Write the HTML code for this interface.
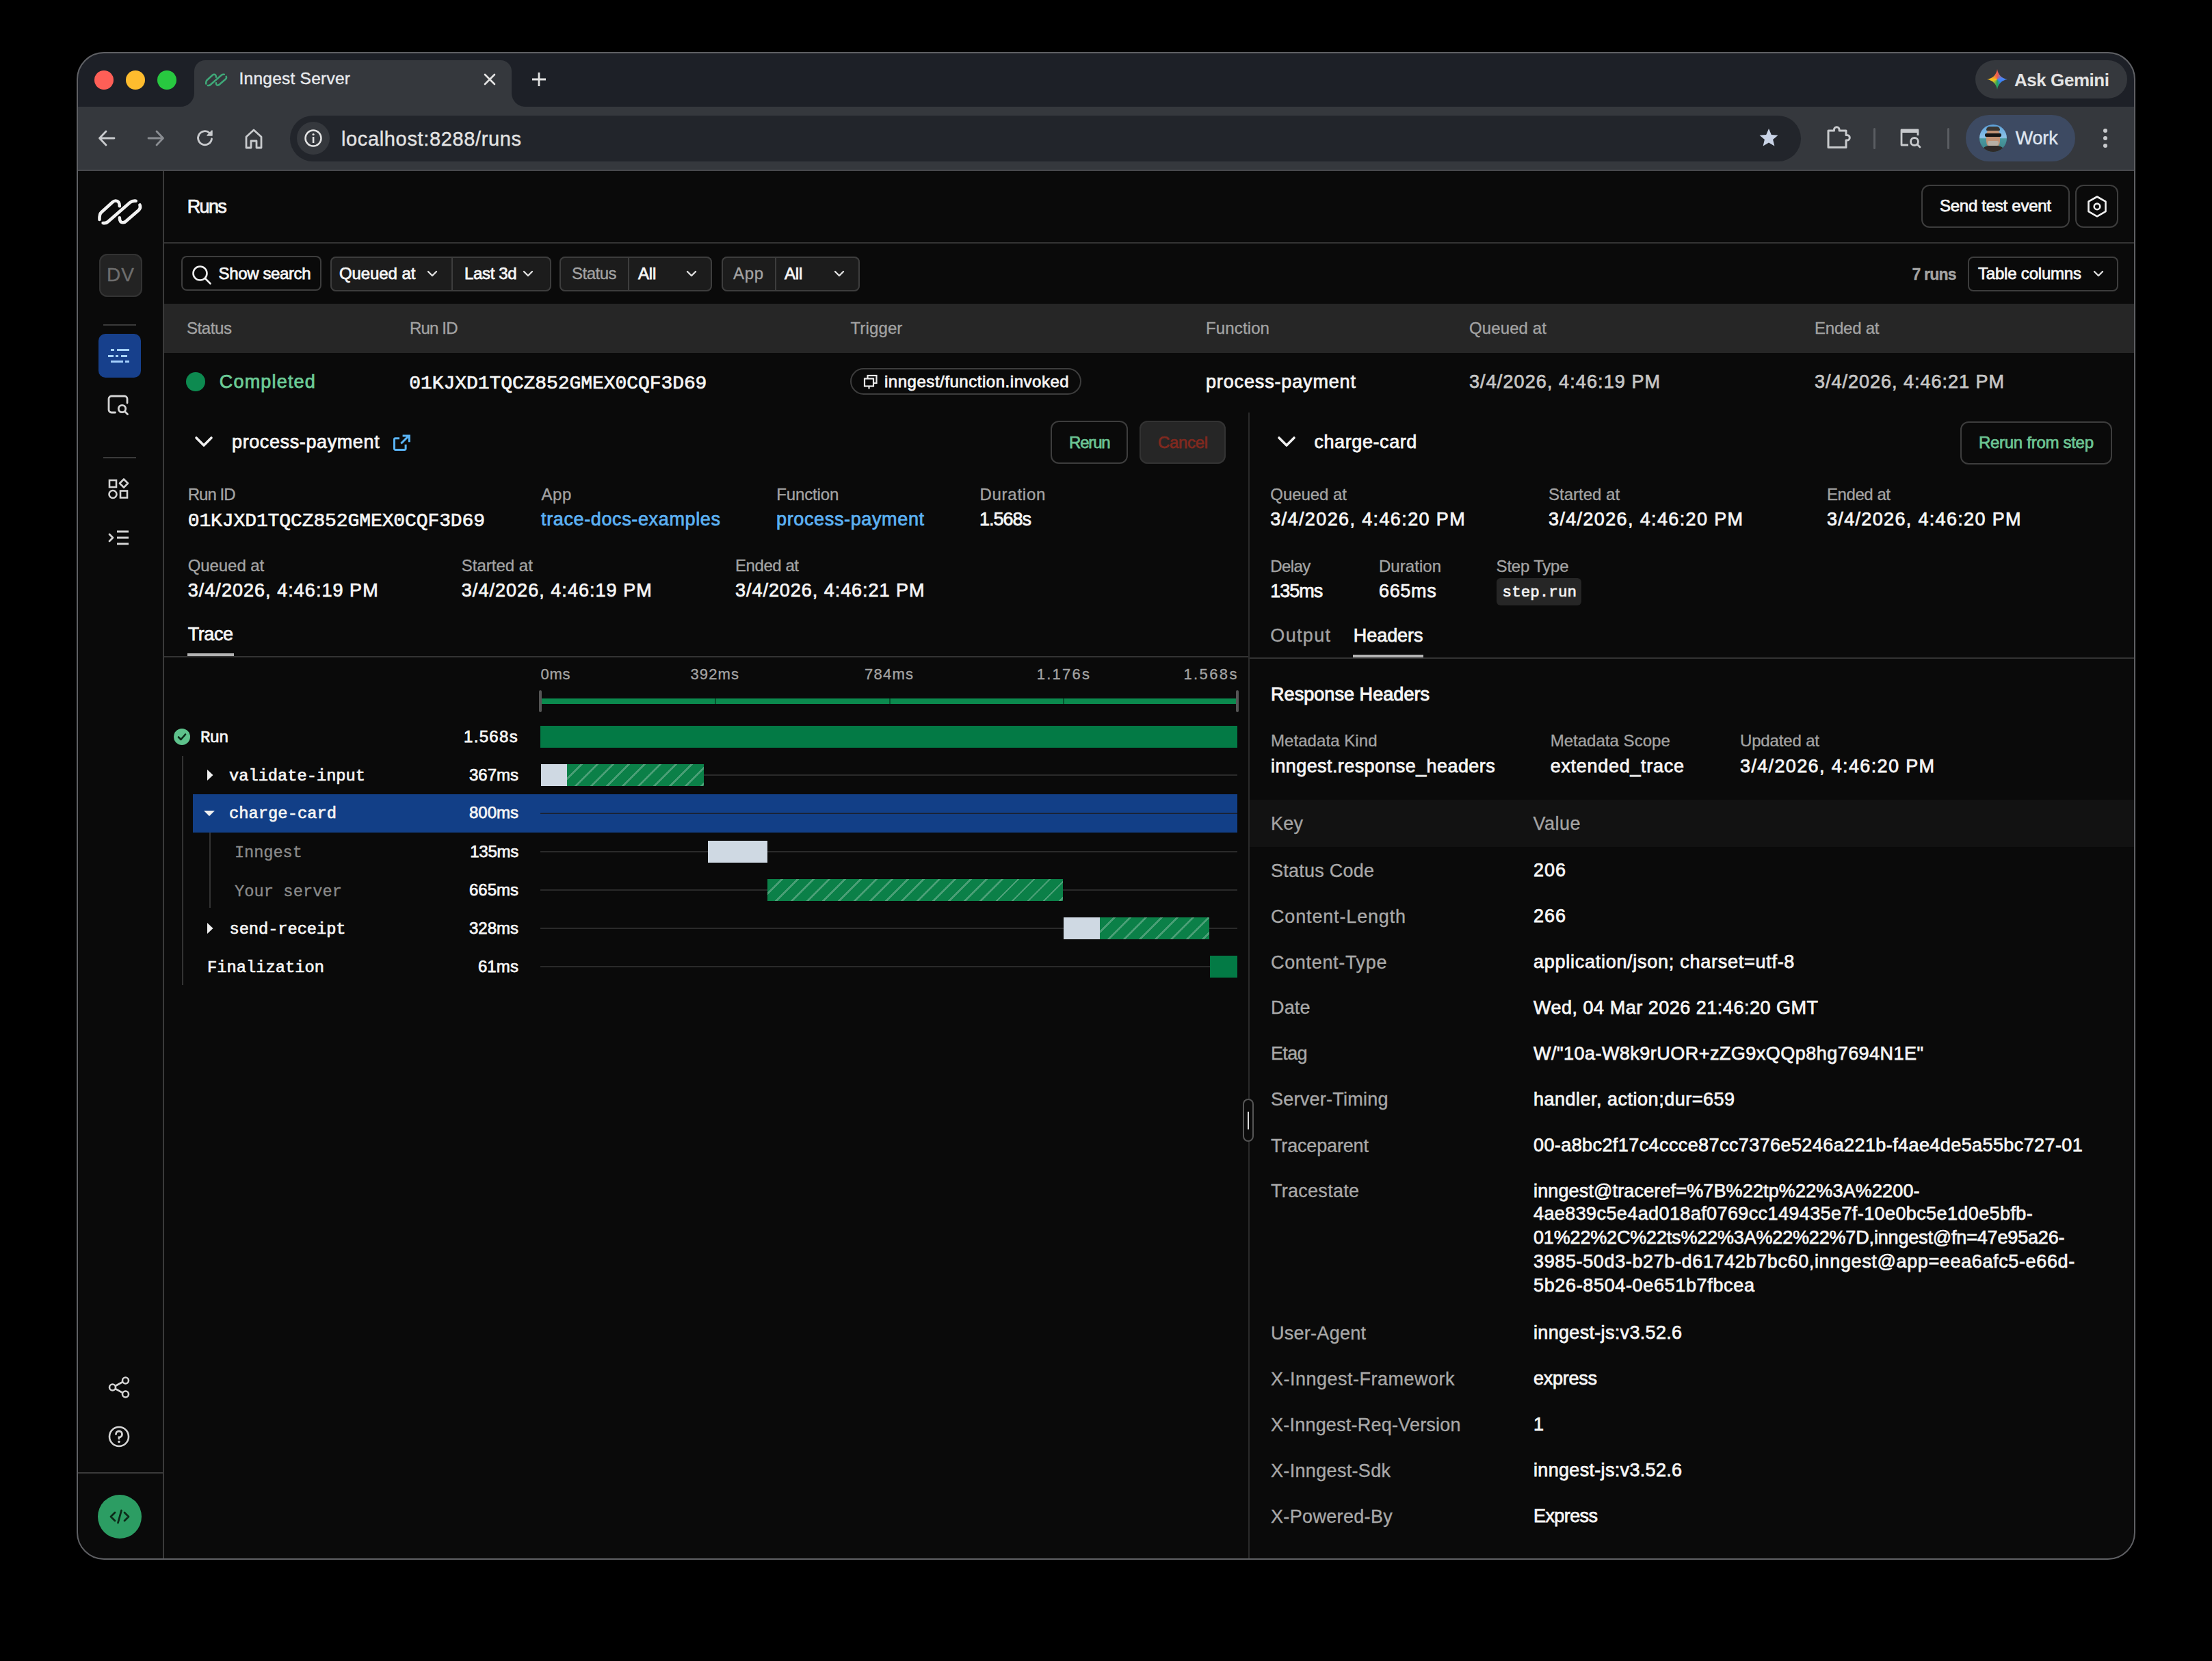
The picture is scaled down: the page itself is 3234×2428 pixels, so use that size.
<!DOCTYPE html>
<html><head><meta charset="utf-8"><style>
html,body{margin:0;padding:0;width:3234px;height:2428px;overflow:hidden;background:#000;}
.a{position:absolute;}
.ts{font-family:"Liberation Sans", sans-serif;white-space:pre;}
.tm{font-family:"Liberation Mono", monospace;white-space:pre;}
#win{position:absolute;left:0;top:0;width:3234px;height:2428px;clip-path:inset(76px 112px 148px 112px round 40px);}
</style></head><body>
<div id="win">
<div class="a" style="left:112px;top:76px;width:3010px;height:80px;background:#1d2027;"></div>
<div class="a" style="left:284px;top:88px;width:464px;height:68px;background:#35383d;border-radius:16px 16px 0 0;"></div>
<div class="a" style="left:264px;top:136px;width:20px;height:20px;background:#35383d"><div style="width:20px;height:20px;background:#1d2027;border-bottom-right-radius:20px"></div></div>
<div class="a" style="left:748px;top:136px;width:20px;height:20px;background:#35383d"><div style="width:20px;height:20px;background:#1d2027;border-bottom-left-radius:20px"></div></div>
<div class="a" style="left:112px;top:156px;width:3010px;height:93px;background:#35383d;"></div>
<div class="a" style="left:137.7px;top:103px;width:28px;height:28px;background:#fe5f57;border-radius:14px;"></div>
<div class="a" style="left:184px;top:103px;width:28px;height:28px;background:#febc2e;border-radius:14px;"></div>
<div class="a" style="left:230px;top:103px;width:28px;height:28px;background:#28c840;border-radius:14px;"></div>
<svg class="a" style="left:296px;top:101.5px;" width="40" height="30" viewBox="0 0 80 60" fill="none"><path d="M39.8 21.3 C40 16 37.5 13.5 34 13.5 C32.5 13.5 31 14.2 29.5 15.5 L13 30.5 C10.5 32.8 10.3 36 10.5 40.9" stroke="#3fa878" stroke-width="5" stroke-linecap="round"/><path d="M15.6 46 C18.5 46.5 21 46 23 44 L55 16 C57.5 14 60 13.3 63.7 13.7" stroke="#3fa878" stroke-width="5" stroke-linecap="round"/><path d="M69.4 19.5 C70.5 22 70 25 68 27 L49 43.5 C47 45.5 43 46 41.3 44 C40 42.5 39.8 40.5 39.8 38.3" stroke="#3fa878" stroke-width="5" stroke-linecap="round"/></svg>
<div class="a ts" id="T0" style="letter-spacing:0.24px;top:103.2px;font-size:24.5px;line-height:24.5px;color:#e8eaed;left:349.5px;-webkit-text-stroke:0.4px #e8eaed;">Inngest Server</div>
<svg class="a" style="left:706px;top:106px;" width="20" height="20" viewBox="0 0 20 20" fill="none"><path d="M3 3L17 17M17 3L3 17" stroke="#e3e3e3" stroke-width="2.6" stroke-linecap="round"/></svg>
<svg class="a" style="left:777px;top:105px;" width="22" height="22" viewBox="0 0 22 22" fill="none"><path d="M11 1V21M1 11H21" stroke="#e3e3e3" stroke-width="2.8"/></svg>
<svg class="a" style="left:142px;top:188px;" width="28" height="28" viewBox="0 0 28 28" fill="none"><path d="M25 14H4M13 4L3.5 14L13 24" stroke="#c8cacd" stroke-width="2.8" stroke-linecap="round" stroke-linejoin="round"/></svg>
<svg class="a" style="left:214px;top:188px;" width="28" height="28" viewBox="0 0 28 28" fill="none"><path d="M3 14H24M15 4L24.5 14L15 24" stroke="#8a8d92" stroke-width="2.8" stroke-linecap="round" stroke-linejoin="round"/></svg>
<svg class="a" style="left:286px;top:188px;" width="28" height="28" viewBox="0 0 28 28" fill="none"><path d="M23.5 15A10 10 0 1 1 20.5 6.5" stroke="#c8cacd" stroke-width="2.8" stroke-linecap="round"/><path d="M24 3V10H17Z" fill="#c8cacd" stroke="#c8cacd" stroke-width="1.5" stroke-linejoin="round"/></svg>
<svg class="a" style="left:357px;top:188px;" width="28" height="30" viewBox="0 0 28 30" fill="none"><path d="M3 28V12L14 2L25 12V28H18V18H10V28Z" stroke="#c8cacd" stroke-width="2.8" stroke-linejoin="round"/></svg>
<div class="a" style="left:424px;top:168.5px;width:2209px;height:67px;background:#22252b;border-radius:34px;"></div>
<div class="a" style="left:434px;top:178px;width:48px;height:48px;background:#35383d;border-radius:24px;"></div>
<svg class="a" style="left:444px;top:188px;" width="28" height="28" viewBox="0 0 28 28" fill="none"><circle cx="14" cy="14" r="11.5" stroke="#e3e3e3" stroke-width="2.5"/><rect x="12.8" y="12" width="2.6" height="9" fill="#e3e3e3"/><circle cx="14.1" cy="8.5" r="1.6" fill="#e3e3e3"/></svg>
<div class="a ts" id="T1" style="letter-spacing:0.64px;top:189.3px;font-size:29px;line-height:29px;color:#e3e3e3;left:499px;-webkit-text-stroke:0.4px #e3e3e3;">localhost:8288/runs</div>
<svg class="a" style="left:2571px;top:186px;" width="30" height="30" viewBox="0 0 30 30" fill="none"><path d="M15 2L18.8 10.9L28.5 11.7L21.1 18L23.4 27.5L15 22.5L6.6 27.5L8.9 18L1.5 11.7L11.2 10.9Z" fill="#c9d3e6"/></svg>
<svg class="a" style="left:2666px;top:180px;" width="42" height="42" viewBox="0 0 42 42" fill="none"><path d="M7 11H15.5V9.5A3.8 3.8 0 0 1 23.1 9.5V11H33V17.5H34.5A3.8 3.8 0 0 1 34.5 25.1H33V35.5H7Z" stroke="#c8cacd" stroke-width="3" stroke-linejoin="round"/></svg>
<div class="a" style="left:2738.5px;top:187px;width:3px;height:31px;background:#5a5d62;border-radius:2px;"></div>
<svg class="a" style="left:2776px;top:184px;" width="36" height="36" viewBox="0 0 36 36" fill="none"><path d="M14 28H4V6H28V14" stroke="#c8cacd" stroke-width="2.8" stroke-linejoin="round"/><rect x="4" y="5" width="24" height="5" fill="#c8cacd"/><circle cx="23" cy="23" r="5.5" stroke="#c8cacd" stroke-width="2.8"/><path d="M27 27L31 31" stroke="#c8cacd" stroke-width="2.8" stroke-linecap="round"/></svg>
<div class="a" style="left:2846.5px;top:187px;width:3px;height:31px;background:#5a5d62;border-radius:2px;"></div>
<div class="a" style="left:2874px;top:168px;width:160px;height:68px;background:#3d4a62;border-radius:34px;"></div>
<div class="a" style="left:2894px;top:182px;width:40px;height:40px;border-radius:20px;overflow:hidden;background:linear-gradient(#5b9fd8 0%,#8cc3e8 48%,#4a9aa0 52%,#3a7f86 100%)"><div style="position:absolute;left:10px;top:5px;width:20px;height:30px;border-radius:10px;background:#c09275"></div><div style="position:absolute;left:10px;top:3px;width:20px;height:6px;background:#3a3530;border-radius:8px 8px 2px 2px"></div><div style="position:absolute;left:8px;top:13px;width:24px;height:5px;background:#151515;border-radius:2px"></div><div style="position:absolute;left:12px;top:24px;width:16px;height:10px;background:#b8b0a5;border-radius:2px 2px 8px 8px"></div><div style="position:absolute;left:2px;top:31px;width:36px;height:12px;background:#2f2a28;border-radius:12px 12px 0 0"></div></div>
<div class="a ts" id="T2" style="letter-spacing:-0.17px;top:188.9px;font-size:27px;line-height:27px;color:#dfe5f0;left:2946.7px;-webkit-text-stroke:0.4px #dfe5f0;">Work</div>
<div class="a" style="left:3074.8px;top:187.8px;width:6.5px;height:6.5px;background:#c8cacd;border-radius:3.3px;"></div>
<div class="a" style="left:3074.8px;top:198.8px;width:6.5px;height:6.5px;background:#c8cacd;border-radius:3.3px;"></div>
<div class="a" style="left:3074.8px;top:209.8px;width:6.5px;height:6.5px;background:#c8cacd;border-radius:3.3px;"></div>
<div class="a" style="left:2888px;top:88px;width:222px;height:56px;background:#35383d;border-radius:28px;"></div>
<div class="a" style="left:2904px;top:100px;width:32px;height:32px;background:conic-gradient(from 0deg at 50% 50%, #f05a4c 0deg, #4c84f5 80deg, #3b82f6 120deg, #22a45d 180deg, #f5c518 260deg, #f05a4c 360deg);clip-path:path('M16 1C17 9 23 15 31 16C23 17 17 23 16 31C15 23 9 17 1 16C9 15 15 9 16 1Z')"></div>
<div class="a ts" id="T3" style="letter-spacing:-0.45px;top:104.0px;font-size:26px;line-height:26px;color:#e3e3e3;font-weight:700;left:2945px;">Ask Gemini</div>
<div class="a" style="left:112px;top:250px;width:3010px;height:2030px;background:#0a0a0a;"></div>
<div class="a" style="left:112px;top:248px;width:3010px;height:2px;background:#48494d;"></div>
<div class="a" style="left:238px;top:250px;width:2px;height:2030px;background:#3a3a3a;"></div>
<svg class="a" style="left:135px;top:280px;" width="80" height="60" viewBox="0 0 80 60" fill="none"><path d="M39.8 21.3 C40 16 37.5 13.5 34 13.5 C32.5 13.5 31 14.2 29.5 15.5 L13 30.5 C10.5 32.8 10.3 36 10.5 40.9" stroke="#f2f2f2" stroke-width="4.6" stroke-linecap="round"/><path d="M15.6 46 C18.5 46.5 21 46 23 44 L55 16 C57.5 14 60 13.3 63.7 13.7" stroke="#f2f2f2" stroke-width="4.6" stroke-linecap="round"/><path d="M69.4 19.5 C70.5 22 70 25 68 27 L49 43.5 C47 45.5 43 46 41.3 44 C40 42.5 39.8 40.5 39.8 38.3" stroke="#f2f2f2" stroke-width="4.6" stroke-linecap="round"/></svg>
<div class="a" style="left:144.5px;top:371px;width:63px;height:63px;background:#232323;border-radius:12px;box-shadow:inset 0 0 0 2px #333;"></div>
<div class="a ts" id="T4" style="letter-spacing:1.09px;top:388.2px;font-size:28px;line-height:28px;color:#6e6e6e;left:156px;-webkit-text-stroke:0.35px #6e6e6e;">DV</div>
<div class="a" style="left:151px;top:474px;width:48px;height:2px;background:#3a3a3a;"></div>
<div class="a" style="left:144px;top:488px;width:62px;height:64px;background:#17408c;border-radius:10px;"></div>
<div class="a" style="left:161.8px;top:509.5px;width:5.599999999999994px;height:3px;background:#a6d2ff;"></div>
<div class="a" style="left:170.6px;top:509.5px;width:18.599999999999994px;height:3px;background:#a6d2ff;"></div>
<div class="a" style="left:158.4px;top:518.5px;width:7.599999999999994px;height:3px;background:#a6d2ff;"></div>
<div class="a" style="left:169px;top:518.5px;width:4.400000000000006px;height:3px;background:#a6d2ff;"></div>
<div class="a" style="left:177px;top:518.5px;width:9px;height:3px;background:#a6d2ff;"></div>
<div class="a" style="left:161.8px;top:526.9px;width:17.899999999999977px;height:3px;background:#a6d2ff;"></div>
<div class="a" style="left:183.3px;top:526.9px;width:5.899999999999977px;height:3px;background:#a6d2ff;"></div>
<svg class="a" style="left:156px;top:576px;" width="34" height="32" viewBox="0 0 34 32" fill="none"><path d="M12.5 27H7A4 4 0 0 1 3 23V7A4 4 0 0 1 7 3H26A4 4 0 0 1 30 7V13" stroke="#d4d4d4" stroke-width="2.8" stroke-linecap="round"/><circle cx="22.5" cy="21.5" r="5.2" stroke="#d4d4d4" stroke-width="2.8"/><path d="M26.5 25.5L30.5 29.5" stroke="#d4d4d4" stroke-width="2.8" stroke-linecap="round"/></svg>
<div class="a" style="left:151px;top:668px;width:48px;height:2px;background:#3a3a3a;"></div>
<svg class="a" style="left:156px;top:698px;" width="34" height="34" viewBox="0 0 34 34" fill="none"><rect x="4" y="4" width="10" height="10" stroke="#d4d4d4" stroke-width="2.6"/><path d="M25 2.5L31 8.5L25 14.5L19 8.5Z" stroke="#d4d4d4" stroke-width="2.6" stroke-linejoin="round"/><circle cx="9" cy="24.5" r="5.5" stroke="#d4d4d4" stroke-width="2.6"/><rect x="20" y="19.5" width="10" height="10" stroke="#d4d4d4" stroke-width="2.6"/></svg>
<svg class="a" style="left:156px;top:772px;" width="36" height="28" viewBox="0 0 36 28" fill="none"><path d="M4 9L9 14L4 19" stroke="#d4d4d4" stroke-width="2.8" stroke-linecap="round" stroke-linejoin="round"/><path d="M15 5H32M15 14H32M15 23H32" stroke="#d4d4d4" stroke-width="2.8"/></svg>
<svg class="a" style="left:156px;top:2010px;" width="36" height="36" viewBox="0 0 36 36" fill="none"><circle cx="8.5" cy="18" r="4.5" stroke="#d4d4d4" stroke-width="2.6"/><circle cx="27.5" cy="8" r="4.5" stroke="#d4d4d4" stroke-width="2.6"/><circle cx="27.5" cy="28" r="4.5" stroke="#d4d4d4" stroke-width="2.6"/><path d="M12.5 16L23.5 10M12.5 20L23.5 26" stroke="#d4d4d4" stroke-width="2.6"/></svg>
<svg class="a" style="left:157px;top:2083px;" width="34" height="34" viewBox="0 0 34 34" fill="none"><circle cx="17" cy="17" r="14" stroke="#d4d4d4" stroke-width="2.6"/><path d="M12.5 13.5A4.5 4.5 0 1 1 17 18V20" stroke="#d4d4d4" stroke-width="2.8" stroke-linecap="round"/><circle cx="17" cy="24.5" r="1.8" fill="#d4d4d4"/></svg>
<div class="a" style="left:112px;top:2152px;width:126px;height:2px;background:#3a3a3a;"></div>
<div class="a" style="left:143px;top:2185px;width:64px;height:64px;background:#2c9d63;border-radius:32px;"></div>
<svg class="a" style="left:155px;top:2197px;" width="40" height="40" viewBox="0 0 40 40" fill="none"><path d="M13 14L7 20L13 26M27 14L33 20L27 26M22.5 11L17.5 29" stroke="#0d2a18" stroke-width="2.8" stroke-linecap="round" stroke-linejoin="round"/></svg>
<div class="a ts" id="T5" style="letter-spacing:-1.68px;top:288.9px;font-size:27px;line-height:27px;color:#f5f5f5;left:273.8px;-webkit-text-stroke:0.75px #f5f5f5;">Runs</div>
<div class="a" style="left:240px;top:354px;width:2880px;height:2px;background:#333333;"></div>
<div class="a" style="left:2809px;top:270px;width:217px;height:63px;border-radius:12px;box-shadow:inset 0 0 0 2px #3d3d3d;"></div>
<div class="a ts" id="T6" style="letter-spacing:-0.27px;top:289.3px;font-size:24px;line-height:24px;color:#f5f5f5;left:2836px;-webkit-text-stroke:0.75px #f5f5f5;">Send test event</div>
<div class="a" style="left:3034px;top:270px;width:63px;height:63px;border-radius:12px;box-shadow:inset 0 0 0 2px #3d3d3d;"></div>
<svg class="a" style="left:3047px;top:283px;" width="37" height="37" viewBox="0 0 37 37" fill="none"><path d="M19 4.5L31.5 11.7V26.1L19 33.3L6.5 26.1V11.7Z" stroke="#f0f0f0" stroke-width="2.6" stroke-linejoin="round"/><circle cx="19" cy="18.9" r="4.3" stroke="#f0f0f0" stroke-width="2.6"/></svg>
<div class="a" style="left:265px;top:374px;width:205px;height:51px;border-radius:8px;box-shadow:inset 0 0 0 2px #3d3d3d;"></div>
<svg class="a" style="left:279px;top:386px;" width="32" height="32" viewBox="0 0 32 32" fill="none"><circle cx="13.5" cy="13.5" r="10" stroke="#f0f0f0" stroke-width="2.6"/><path d="M21 21L28.5 28.5" stroke="#f0f0f0" stroke-width="2.6" stroke-linecap="round"/></svg>
<div class="a ts" id="T7" style="letter-spacing:-0.38px;top:387.6px;font-size:24px;line-height:24px;color:#f5f5f5;left:319.6px;-webkit-text-stroke:0.75px #f5f5f5;">Show search</div>
<div class="a" style="left:483px;top:374.5px;width:323px;height:51px;background:#1c1c1c;border-radius:8px;box-shadow:inset 0 0 0 2px #3d3d3d;"></div>
<div class="a" style="left:659.6px;top:376px;width:2px;height:48px;background:#3d3d3d;"></div>
<div class="a ts" id="T8" style="letter-spacing:-0.09px;top:387.6px;font-size:24px;line-height:24px;color:#f5f5f5;left:496px;-webkit-text-stroke:0.75px #f5f5f5;">Queued at</div>
<svg class="a" style="left:624px;top:395px;" width="16" height="10" viewBox="0 0 16 10" fill="none"><path d="M2 2L8 8L14 2" stroke="#e0e0e0" stroke-width="2.4" stroke-linecap="round" stroke-linejoin="round"/></svg>
<div class="a ts" id="T9" style="letter-spacing:-0.34px;top:387.6px;font-size:24px;line-height:24px;color:#f5f5f5;left:679px;-webkit-text-stroke:0.75px #f5f5f5;">Last 3d</div>
<svg class="a" style="left:764px;top:395px;" width="16" height="10" viewBox="0 0 16 10" fill="none"><path d="M2 2L8 8L14 2" stroke="#e0e0e0" stroke-width="2.4" stroke-linecap="round" stroke-linejoin="round"/></svg>
<div class="a" style="left:818px;top:374.5px;width:223px;height:51px;background:#1c1c1c;border-radius:8px;box-shadow:inset 0 0 0 2px #3d3d3d;"></div>
<div class="a" style="left:917.5px;top:376px;width:2px;height:48px;background:#3d3d3d;"></div>
<div class="a ts" id="T10" style="letter-spacing:-0.51px;top:387.6px;font-size:24px;line-height:24px;color:#a3a3a3;left:836px;-webkit-text-stroke:0.35px #a3a3a3;">Status</div>
<div class="a ts" id="T11" style="letter-spacing:-0.19px;top:387.6px;font-size:24px;line-height:24px;color:#f5f5f5;left:933px;-webkit-text-stroke:0.75px #f5f5f5;">All</div>
<svg class="a" style="left:1003px;top:395px;" width="16" height="10" viewBox="0 0 16 10" fill="none"><path d="M2 2L8 8L14 2" stroke="#e0e0e0" stroke-width="2.4" stroke-linecap="round" stroke-linejoin="round"/></svg>
<div class="a" style="left:1055px;top:374.5px;width:202px;height:51px;background:#1c1c1c;border-radius:8px;box-shadow:inset 0 0 0 2px #3d3d3d;"></div>
<div class="a" style="left:1133px;top:376px;width:2px;height:48px;background:#3d3d3d;"></div>
<div class="a ts" id="T12" style="letter-spacing:0.65px;top:387.6px;font-size:24px;line-height:24px;color:#a3a3a3;left:1072px;-webkit-text-stroke:0.35px #a3a3a3;">App</div>
<div class="a ts" id="T13" style="letter-spacing:-0.19px;top:387.6px;font-size:24px;line-height:24px;color:#f5f5f5;left:1147px;-webkit-text-stroke:0.75px #f5f5f5;">All</div>
<svg class="a" style="left:1218.6px;top:395px;" width="16" height="10" viewBox="0 0 16 10" fill="none"><path d="M2 2L8 8L14 2" stroke="#e0e0e0" stroke-width="2.4" stroke-linecap="round" stroke-linejoin="round"/></svg>
<div class="a ts" id="T14" style="letter-spacing:-0.81px;top:390.4px;font-size:23px;line-height:23px;color:#a3a3a3;font-weight:700;left:2795.5px;-webkit-text-stroke:0.35px #a3a3a3;">7 runs</div>
<div class="a" style="left:2877px;top:375px;width:220px;height:51px;border-radius:8px;box-shadow:inset 0 0 0 2px #3d3d3d;"></div>
<div class="a ts" id="T15" style="letter-spacing:-0.20px;top:387.6px;font-size:24px;line-height:24px;color:#f5f5f5;left:2892px;-webkit-text-stroke:0.75px #f5f5f5;">Table columns</div>
<svg class="a" style="left:3059.6px;top:395px;" width="16" height="10" viewBox="0 0 16 10" fill="none"><path d="M2 2L8 8L14 2" stroke="#e0e0e0" stroke-width="2.4" stroke-linecap="round" stroke-linejoin="round"/></svg>
<div class="a" style="left:240px;top:444px;width:2880px;height:72px;background:#262626;"></div>
<div class="a ts" id="T16" style="letter-spacing:-0.41px;top:468.4px;font-size:24px;line-height:24px;color:#a3a3a3;left:273px;-webkit-text-stroke:0.35px #a3a3a3;">Status</div>
<div class="a ts" id="T17" style="letter-spacing:-0.84px;top:468.4px;font-size:24px;line-height:24px;color:#a3a3a3;left:599px;-webkit-text-stroke:0.35px #a3a3a3;">Run ID</div>
<div class="a ts" id="T18" style="letter-spacing:0.14px;top:468.4px;font-size:24px;line-height:24px;color:#a3a3a3;left:1243.4px;-webkit-text-stroke:0.35px #a3a3a3;">Trigger</div>
<div class="a ts" id="T19" style="letter-spacing:0.13px;top:468.4px;font-size:24px;line-height:24px;color:#a3a3a3;left:1763px;-webkit-text-stroke:0.35px #a3a3a3;">Function</div>
<div class="a ts" id="T20" style="letter-spacing:0.11px;top:468.4px;font-size:24px;line-height:24px;color:#a3a3a3;left:2148px;-webkit-text-stroke:0.35px #a3a3a3;">Queued at</div>
<div class="a ts" id="T21" style="letter-spacing:-0.23px;top:468.4px;font-size:24px;line-height:24px;color:#a3a3a3;left:2653px;-webkit-text-stroke:0.35px #a3a3a3;">Ended at</div>
<div class="a" style="left:272px;top:544px;width:28px;height:28px;background:#0d8a50;border-radius:14px;"></div>
<div class="a ts" id="T22" style="letter-spacing:1.18px;top:544.8px;font-size:27px;line-height:27px;color:#6ccb96;left:320.8px;-webkit-text-stroke:0.75px #6ccb96;">Completed</div>
<div class="a tm" id="T23" style="letter-spacing:-0.07px;top:546.8px;font-size:28px;line-height:28px;color:#f5f5f5;left:598.3px;-webkit-text-stroke:0.7px #f5f5f5;">01KJXD1TQCZ852GMEX0CQF3D69</div>
<div class="a" style="left:1243.4px;top:538.4px;width:338px;height:39px;border-radius:20px;box-shadow:inset 0 0 0 2px #3d3d3d;"></div>
<svg class="a" style="left:1261px;top:546px;" width="24" height="24" viewBox="0 0 24 24" fill="none"><rect x="7.5" y="3" width="13" height="11" stroke="#e8e8e8" stroke-width="2.2"/><rect x="3" y="7.5" width="13" height="11" fill="#0a0a0a" stroke="#e8e8e8" stroke-width="2.2"/><path d="M9.5 18.5V22.5" stroke="#e8e8e8" stroke-width="2.2"/></svg>
<div class="a ts" id="T24" style="letter-spacing:0.53px;top:546.2px;font-size:24px;line-height:24px;color:#f5f5f5;left:1293px;-webkit-text-stroke:0.75px #f5f5f5;">inngest/function.invoked</div>
<div class="a ts" id="T25" style="letter-spacing:0.85px;top:545.4px;font-size:27px;line-height:27px;color:#f5f5f5;left:1763px;-webkit-text-stroke:0.75px #f5f5f5;">process-payment</div>
<div class="a ts" id="T26" style="letter-spacing:1.10px;top:545.0px;font-size:27px;line-height:27px;color:#c4c4c4;left:2148px;-webkit-text-stroke:0.75px #c4c4c4;">3/4/2026, 4:46:19 PM</div>
<div class="a ts" id="T27" style="letter-spacing:0.99px;top:545.0px;font-size:27px;line-height:27px;color:#c4c4c4;left:2653px;-webkit-text-stroke:0.75px #c4c4c4;">3/4/2026, 4:46:21 PM</div>
<svg class="a" style="left:284px;top:636px;" width="28" height="22" viewBox="0 0 28 22" fill="none"><path d="M3 4L14 15L25 4" stroke="#f0f0f0" stroke-width="3.6" stroke-linecap="round" stroke-linejoin="round"/></svg>
<div class="a ts" id="T28" style="letter-spacing:0.61px;top:633.4px;font-size:27px;line-height:27px;color:#f5f5f5;left:339px;-webkit-text-stroke:0.75px #f5f5f5;">process-payment</div>
<svg class="a" style="left:573px;top:632px;" width="30" height="30" viewBox="0 0 30 30" fill="none"><path d="M11 8.8H5A1.5 1.5 0 0 0 3.5 10.3V23.9A1.5 1.5 0 0 0 5 25.4H18.6A1.5 1.5 0 0 0 20.1 23.9V17.8" stroke="#5ab4f5" stroke-width="3"/><path d="M13.3 16.4L24.6 5.1M15.6 4.9H25.4V14.2" stroke="#5ab4f5" stroke-width="3"/></svg>
<div class="a" style="left:1536.4px;top:615.3px;width:113px;height:63px;border-radius:12px;box-shadow:inset 0 0 0 2px #3d3d3d;"></div>
<div class="a ts" id="T29" style="letter-spacing:-1.17px;top:635.1px;font-size:24px;line-height:24px;color:#6cc493;left:1563px;-webkit-text-stroke:0.75px #6cc493;">Rerun</div>
<div class="a" style="left:1666.4px;top:615.3px;width:126px;height:63px;background:#262626;border-radius:12px;box-shadow:inset 0 0 0 2px #333;"></div>
<div class="a ts" id="T30" style="letter-spacing:-0.34px;top:635.1px;font-size:24px;line-height:24px;color:#80291f;left:1693px;-webkit-text-stroke:0.75px #80291f;">Cancel</div>
<div class="a" style="left:1824.5px;top:603px;width:2px;height:1676px;background:#2a2a2a;"></div>
<div class="a ts" id="T31" style="letter-spacing:-0.94px;top:710.6px;font-size:24px;line-height:24px;color:#a3a3a3;left:274.7px;-webkit-text-stroke:0.35px #a3a3a3;">Run ID</div>
<div class="a ts" id="T32" style="letter-spacing:0.65px;top:710.6px;font-size:24px;line-height:24px;color:#a3a3a3;left:791.4px;-webkit-text-stroke:0.35px #a3a3a3;">App</div>
<div class="a ts" id="T33" style="letter-spacing:-0.15px;top:710.6px;font-size:24px;line-height:24px;color:#a3a3a3;left:1135.3px;-webkit-text-stroke:0.35px #a3a3a3;">Function</div>
<div class="a ts" id="T34" style="letter-spacing:0.75px;top:710.6px;font-size:24px;line-height:24px;color:#a3a3a3;left:1432.4px;-webkit-text-stroke:0.35px #a3a3a3;">Duration</div>
<div class="a tm" id="T35" style="letter-spacing:-0.10px;top:747.6px;font-size:28px;line-height:28px;color:#f5f5f5;left:274.7px;-webkit-text-stroke:0.7px #f5f5f5;">01KJXD1TQCZ852GMEX0CQF3D69</div>
<div class="a ts" id="T36" style="letter-spacing:0.63px;top:746.0px;font-size:27px;line-height:27px;color:#5cb1f2;left:791px;-webkit-text-stroke:0.75px #5cb1f2;">trace-docs-examples</div>
<div class="a ts" id="T37" style="letter-spacing:0.64px;top:746.0px;font-size:27px;line-height:27px;color:#5cb1f2;left:1135px;-webkit-text-stroke:0.75px #5cb1f2;">process-payment</div>
<div class="a ts" id="T38" style="letter-spacing:-1.02px;top:746.0px;font-size:27px;line-height:27px;color:#f5f5f5;left:1432px;-webkit-text-stroke:0.75px #f5f5f5;">1.568s</div>
<div class="a ts" id="T39" style="letter-spacing:-0.07px;top:815.1px;font-size:24px;line-height:24px;color:#a3a3a3;left:274.7px;-webkit-text-stroke:0.35px #a3a3a3;">Queued at</div>
<div class="a ts" id="T40" style="top:815.1px;font-size:24px;line-height:24px;color:#a3a3a3;left:674.8px;-webkit-text-stroke:0.35px #a3a3a3;">Started at</div>
<div class="a ts" id="T41" style="letter-spacing:-0.44px;top:815.1px;font-size:24px;line-height:24px;color:#a3a3a3;left:1075px;-webkit-text-stroke:0.35px #a3a3a3;">Ended at</div>
<div class="a ts" id="T42" style="letter-spacing:1.04px;top:850.4px;font-size:27px;line-height:27px;color:#f5f5f5;left:274.7px;-webkit-text-stroke:0.75px #f5f5f5;">3/4/2026, 4:46:19 PM</div>
<div class="a ts" id="T43" style="letter-spacing:1.04px;top:850.4px;font-size:27px;line-height:27px;color:#f5f5f5;left:674.8px;-webkit-text-stroke:0.75px #f5f5f5;">3/4/2026, 4:46:19 PM</div>
<div class="a ts" id="T44" style="letter-spacing:0.96px;top:850.4px;font-size:27px;line-height:27px;color:#f5f5f5;left:1075px;-webkit-text-stroke:0.75px #f5f5f5;">3/4/2026, 4:46:21 PM</div>
<div class="a ts" id="T45" style="letter-spacing:-0.43px;top:914.2px;font-size:27px;line-height:27px;color:#f5f5f5;left:274.7px;-webkit-text-stroke:0.75px #f5f5f5;">Trace</div>
<div class="a" style="left:274px;top:955px;width:68px;height:4px;background:#b3b3b3;"></div>
<div class="a" style="left:240px;top:959px;width:1585px;height:2px;background:#333333;"></div>
<div class="a ts" id="T46" style="letter-spacing:0.72px;top:975.3px;font-size:22px;line-height:22px;color:#a3a3a3;left:790.6px;-webkit-text-stroke:0.35px #a3a3a3;">0ms</div>
<div class="a ts" id="T47" style="letter-spacing:1.11px;top:975.3px;font-size:22px;line-height:22px;color:#a3a3a3;left:1009.5px;-webkit-text-stroke:0.35px #a3a3a3;">392ms</div>
<div class="a ts" id="T48" style="letter-spacing:1.24px;top:975.3px;font-size:22px;line-height:22px;color:#a3a3a3;left:1264px;-webkit-text-stroke:0.35px #a3a3a3;">784ms</div>
<div class="a ts" id="T49" style="letter-spacing:2.25px;top:975.3px;font-size:22px;line-height:22px;color:#a3a3a3;left:1515.7px;-webkit-text-stroke:0.35px #a3a3a3;">1.176s</div>
<div class="a ts" id="T50" style="letter-spacing:2.39px;top:975.3px;font-size:22px;line-height:22px;color:#a3a3a3;left:1730.4px;-webkit-text-stroke:0.35px #a3a3a3;">1.568s</div>
<div class="a" style="left:790px;top:1021px;width:1019px;height:8px;background:#0b8a4e;"></div>
<div class="a" style="left:1044.6px;top:1021px;width:2px;height:8px;background:#06552f;"></div>
<div class="a" style="left:1299.5px;top:1021px;width:2px;height:8px;background:#06552f;"></div>
<div class="a" style="left:1554px;top:1021px;width:2px;height:8px;background:#06552f;"></div>
<div class="a" style="left:788px;top:1009px;width:4px;height:31.5px;background:#555;border-radius:2px;"></div>
<div class="a" style="left:1807px;top:1009px;width:4px;height:31.5px;background:#555;border-radius:2px;"></div>
<svg class="a" style="left:253.8px;top:1065px;" width="24" height="24" viewBox="0 0 24 24" fill="none"><circle cx="12" cy="12" r="12" fill="#5ec28c"/><path d="M7 12.5L10.5 16L17 8.5" stroke="#0a2a18" stroke-width="2.6" stroke-linecap="round" stroke-linejoin="round"/></svg>
<div class="a tm" id="T51" style="letter-spacing:-0.86px;top:1066.6px;font-size:24px;line-height:24px;color:#f5f5f5;left:292.9px;-webkit-text-stroke:0.7px #f5f5f5;">Run</div>
<div class="a ts" id="T52" style="letter-spacing:1.31px;top:1064.6px;font-size:24px;line-height:24px;color:#f5f5f5;right:2476px;-webkit-text-stroke:0.75px #f5f5f5;">1.568s</div>
<div class="a" style="left:790px;top:1061px;width:1019px;height:31.5px;background:#037a45;"></div>
<div class="a" style="left:266px;top:1105px;width:2px;height:335px;background:#333;"></div>
<svg class="a" style="left:301px;top:1124px;" width="14" height="18" viewBox="0 0 14 18" fill="none"><path d="M2 1L10.5 9L2 17Z" fill="#f0f0f0"/></svg>
<div class="a tm" id="T53" style="top:1122.8px;font-size:23.7px;line-height:23.7px;color:#f5f5f5;left:335px;-webkit-text-stroke:0.7px #f5f5f5;">validate-input</div>
<div class="a ts" id="T54" style="letter-spacing:-0.01px;top:1120.6px;font-size:24px;line-height:24px;color:#f5f5f5;right:2476px;-webkit-text-stroke:0.75px #f5f5f5;">367ms</div>
<div class="a" style="left:1029px;top:1132px;width:780px;height:2px;background:#2a2a2a;"></div>
<div class="a" style="left:791px;top:1117px;width:38px;height:32px;background:#cfd9e3;"></div>
<div class="a" style="left:829px;top:1117px;width:200px;height:32px;background:repeating-linear-gradient(135deg,#0b8048 0px,#0b8048 13.6px,#4a9f76 13.6px,#4a9f76 16.3px);"></div>
<div class="a" style="left:282px;top:1161px;width:1527px;height:56px;background:#123f87;"></div>
<div class="a" style="left:790px;top:1188px;width:1019px;height:2px;background:#1a2438;"></div>
<svg class="a" style="left:296px;top:1182px;" width="20" height="14" viewBox="0 0 20 14" fill="none"><path d="M2 3L10 11L18 3Z" fill="#f0f0f0"/></svg>
<div class="a tm" id="T55" style="letter-spacing:0.06px;top:1178.1px;font-size:23.7px;line-height:23.7px;color:#f5f5f5;left:335px;-webkit-text-stroke:0.7px #f5f5f5;">charge-card</div>
<div class="a ts" id="T56" style="letter-spacing:-0.01px;top:1175.9px;font-size:24px;line-height:24px;color:#f5f5f5;right:2476px;-webkit-text-stroke:0.75px #f5f5f5;">800ms</div>
<div class="a" style="left:306px;top:1217px;width:2px;height:110px;background:#333;"></div>
<div class="a tm" id="T57" style="letter-spacing:-0.09px;top:1234.8px;font-size:23.7px;line-height:23.7px;color:#8a8a8a;left:343px;-webkit-text-stroke:0.35px #8a8a8a;">Inngest</div>
<div class="a ts" id="T58" style="letter-spacing:-0.26px;top:1232.6px;font-size:24px;line-height:24px;color:#f5f5f5;right:2476px;-webkit-text-stroke:0.75px #f5f5f5;">135ms</div>
<div class="a" style="left:790px;top:1244px;width:1019px;height:2px;background:#2a2a2a;"></div>
<div class="a" style="left:1035px;top:1229px;width:87px;height:31.5px;background:#cfd9e3;"></div>
<div class="a tm" id="T59" style="letter-spacing:0.06px;top:1291.6px;font-size:23.7px;line-height:23.7px;color:#8a8a8a;left:343px;-webkit-text-stroke:0.35px #8a8a8a;">Your server</div>
<div class="a ts" id="T60" style="letter-spacing:-0.01px;top:1289.4px;font-size:24px;line-height:24px;color:#f5f5f5;right:2476px;-webkit-text-stroke:0.75px #f5f5f5;">665ms</div>
<div class="a" style="left:790px;top:1300px;width:1019px;height:2px;background:#2a2a2a;"></div>
<div class="a" style="left:1122px;top:1285px;width:432px;height:32px;background:repeating-linear-gradient(135deg,#0b8048 0px,#0b8048 13.6px,#4a9f76 13.6px,#4a9f76 16.3px);"></div>
<svg class="a" style="left:301px;top:1348px;" width="14" height="18" viewBox="0 0 14 18" fill="none"><path d="M2 1L10.5 9L2 17Z" fill="#f0f0f0"/></svg>
<div class="a tm" id="T61" style="letter-spacing:-0.05px;top:1346.8px;font-size:23.7px;line-height:23.7px;color:#f5f5f5;left:335.5px;-webkit-text-stroke:0.7px #f5f5f5;">send-receipt</div>
<div class="a ts" id="T62" style="letter-spacing:-0.01px;top:1344.6px;font-size:24px;line-height:24px;color:#f5f5f5;right:2476px;-webkit-text-stroke:0.75px #f5f5f5;">328ms</div>
<div class="a" style="left:790px;top:1356px;width:1019px;height:2px;background:#2a2a2a;"></div>
<div class="a" style="left:1555px;top:1341px;width:53px;height:32px;background:#cfd9e3;"></div>
<div class="a" style="left:1608px;top:1341px;width:160px;height:32px;background:repeating-linear-gradient(135deg,#0b8048 0px,#0b8048 13.6px,#4a9f76 13.6px,#4a9f76 16.3px);"></div>
<div class="a tm" id="T63" style="letter-spacing:0.04px;top:1402.8px;font-size:23.7px;line-height:23.7px;color:#f5f5f5;left:303px;-webkit-text-stroke:0.7px #f5f5f5;">Finalization</div>
<div class="a ts" id="T64" style="letter-spacing:0.10px;top:1400.6px;font-size:24px;line-height:24px;color:#f5f5f5;right:2476px;-webkit-text-stroke:0.75px #f5f5f5;">61ms</div>
<div class="a" style="left:790px;top:1412px;width:1019px;height:2px;background:#2a2a2a;"></div>
<div class="a" style="left:1769px;top:1397px;width:40px;height:32px;background:#037a45;"></div>
<svg class="a" style="left:1867px;top:636px;" width="28" height="22" viewBox="0 0 28 22" fill="none"><path d="M3 4L14 15L25 4" stroke="#f0f0f0" stroke-width="3.6" stroke-linecap="round" stroke-linejoin="round"/></svg>
<div class="a ts" id="T65" style="letter-spacing:0.59px;top:633.4px;font-size:27px;line-height:27px;color:#f5f5f5;left:1921.4px;-webkit-text-stroke:0.75px #f5f5f5;">charge-card</div>
<div class="a" style="left:2866.4px;top:616px;width:221.4px;height:62.6px;border-radius:12px;box-shadow:inset 0 0 0 2px #3d3d3d;"></div>
<div class="a ts" id="T66" style="letter-spacing:-0.29px;top:635.1px;font-size:24px;line-height:24px;color:#6cc493;left:2893px;-webkit-text-stroke:0.75px #6cc493;">Rerun from step</div>
<div class="a ts" id="T67" style="letter-spacing:-0.07px;top:710.6px;font-size:24px;line-height:24px;color:#a3a3a3;left:1857.3px;-webkit-text-stroke:0.35px #a3a3a3;">Queued at</div>
<div class="a ts" id="T68" style="top:710.6px;font-size:24px;line-height:24px;color:#a3a3a3;left:2264px;-webkit-text-stroke:0.35px #a3a3a3;">Started at</div>
<div class="a ts" id="T69" style="letter-spacing:-0.44px;top:710.6px;font-size:24px;line-height:24px;color:#a3a3a3;left:2671px;-webkit-text-stroke:0.35px #a3a3a3;">Ended at</div>
<div class="a ts" id="T70" style="letter-spacing:1.38px;top:746.0px;font-size:27px;line-height:27px;color:#f5f5f5;left:1857.3px;-webkit-text-stroke:0.75px #f5f5f5;">3/4/2026, 4:46:20 PM</div>
<div class="a ts" id="T71" style="letter-spacing:1.36px;top:746.0px;font-size:27px;line-height:27px;color:#f5f5f5;left:2264px;-webkit-text-stroke:0.75px #f5f5f5;">3/4/2026, 4:46:20 PM</div>
<div class="a ts" id="T72" style="letter-spacing:1.33px;top:746.0px;font-size:27px;line-height:27px;color:#f5f5f5;left:2671px;-webkit-text-stroke:0.75px #f5f5f5;">3/4/2026, 4:46:20 PM</div>
<div class="a ts" id="T73" style="letter-spacing:-0.59px;top:815.6px;font-size:24px;line-height:24px;color:#a3a3a3;left:1857.3px;-webkit-text-stroke:0.35px #a3a3a3;">Delay</div>
<div class="a ts" id="T74" style="letter-spacing:0.04px;top:815.6px;font-size:24px;line-height:24px;color:#a3a3a3;left:2016px;-webkit-text-stroke:0.35px #a3a3a3;">Duration</div>
<div class="a ts" id="T75" style="letter-spacing:-0.21px;top:815.6px;font-size:24px;line-height:24px;color:#a3a3a3;left:2187.6px;-webkit-text-stroke:0.35px #a3a3a3;">Step Type</div>
<div class="a ts" id="T76" style="letter-spacing:-1.01px;top:850.5px;font-size:27px;line-height:27px;color:#f5f5f5;left:1857.3px;-webkit-text-stroke:0.75px #f5f5f5;">135ms</div>
<div class="a ts" id="T77" style="letter-spacing:0.66px;top:850.5px;font-size:27px;line-height:27px;color:#f5f5f5;left:2016px;-webkit-text-stroke:0.75px #f5f5f5;">665ms</div>
<div class="a" style="left:2187.6px;top:845px;width:124.8px;height:40px;background:#262626;border-radius:6px;"></div>
<div class="a tm" id="T78" style="letter-spacing:0.05px;top:854.8px;font-size:22.5px;line-height:22.5px;color:#f5f5f5;left:2196.6px;-webkit-text-stroke:0.7px #f5f5f5;">step.run</div>
<div class="a ts" id="T79" style="letter-spacing:1.33px;top:916.0px;font-size:27px;line-height:27px;color:#a3a3a3;left:1857.3px;-webkit-text-stroke:0.35px #a3a3a3;">Output</div>
<div class="a ts" id="T80" style="letter-spacing:-0.06px;top:916.0px;font-size:27px;line-height:27px;color:#f5f5f5;left:1978.8px;-webkit-text-stroke:0.75px #f5f5f5;">Headers</div>
<div class="a" style="left:1978px;top:957px;width:103px;height:4px;background:#b3b3b3;"></div>
<div class="a" style="left:1826.5px;top:961px;width:1294px;height:2px;background:#333333;"></div>
<div class="a ts" id="T81" style="letter-spacing:0.06px;top:1002.0px;font-size:27px;line-height:27px;color:#f5f5f5;left:1858px;-webkit-text-stroke:1.0px #f5f5f5;">Response Headers</div>
<div class="a ts" id="T82" style="letter-spacing:0.06px;top:1070.9px;font-size:24px;line-height:24px;color:#a3a3a3;left:1858px;-webkit-text-stroke:0.35px #a3a3a3;">Metadata Kind</div>
<div class="a ts" id="T83" style="letter-spacing:0.02px;top:1070.9px;font-size:24px;line-height:24px;color:#a3a3a3;left:2266.7px;-webkit-text-stroke:0.35px #a3a3a3;">Metadata Scope</div>
<div class="a ts" id="T84" style="letter-spacing:-0.16px;top:1070.9px;font-size:24px;line-height:24px;color:#a3a3a3;left:2544px;-webkit-text-stroke:0.35px #a3a3a3;">Updated at</div>
<div class="a ts" id="T85" style="letter-spacing:0.41px;top:1106.5px;font-size:27px;line-height:27px;color:#f5f5f5;left:1858px;-webkit-text-stroke:0.75px #f5f5f5;">inngest.response_headers</div>
<div class="a ts" id="T86" style="letter-spacing:0.70px;top:1106.5px;font-size:27px;line-height:27px;color:#f5f5f5;left:2266.7px;-webkit-text-stroke:0.75px #f5f5f5;">extended_trace</div>
<div class="a ts" id="T87" style="letter-spacing:1.36px;top:1106.5px;font-size:27px;line-height:27px;color:#f5f5f5;left:2544px;-webkit-text-stroke:0.75px #f5f5f5;">3/4/2026, 4:46:20 PM</div>
<div class="a" style="left:1826.5px;top:1169px;width:1294px;height:69px;background:#121212;"></div>
<div class="a ts" id="T88" style="letter-spacing:0.23px;top:1190.8px;font-size:27px;line-height:27px;color:#a3a3a3;left:1858px;-webkit-text-stroke:0.35px #a3a3a3;">Key</div>
<div class="a ts" id="T89" style="letter-spacing:0.48px;top:1190.8px;font-size:27px;line-height:27px;color:#a3a3a3;left:2241.6px;-webkit-text-stroke:0.35px #a3a3a3;">Value</div>
<div class="a ts" id="T90" style="letter-spacing:0.24px;top:1259.5px;font-size:27px;line-height:27px;color:#a8a8a8;left:1858px;-webkit-text-stroke:0.35px #a8a8a8;">Status Code</div>
<div class="a ts" id="T91" style="letter-spacing:0.97px;top:1259.0px;font-size:27px;line-height:27px;color:#f5f5f5;left:2242px;-webkit-text-stroke:0.75px #f5f5f5;">206</div>
<div class="a ts" id="T92" style="letter-spacing:0.84px;top:1326.5px;font-size:27px;line-height:27px;color:#a8a8a8;left:1858px;-webkit-text-stroke:0.35px #a8a8a8;">Content-Length</div>
<div class="a ts" id="T93" style="letter-spacing:0.97px;top:1326.0px;font-size:27px;line-height:27px;color:#f5f5f5;left:2242px;-webkit-text-stroke:0.75px #f5f5f5;">266</div>
<div class="a ts" id="T94" style="letter-spacing:0.67px;top:1393.5px;font-size:27px;line-height:27px;color:#a8a8a8;left:1858px;-webkit-text-stroke:0.35px #a8a8a8;">Content-Type</div>
<div class="a ts" id="T95" style="letter-spacing:0.73px;top:1393.0px;font-size:27px;line-height:27px;color:#f5f5f5;left:2242px;-webkit-text-stroke:0.75px #f5f5f5;">application/json; charset=utf-8</div>
<div class="a ts" id="T96" style="letter-spacing:0.18px;top:1460.0px;font-size:27px;line-height:27px;color:#a8a8a8;left:1858px;-webkit-text-stroke:0.35px #a8a8a8;">Date</div>
<div class="a ts" id="T97" style="letter-spacing:0.51px;top:1459.5px;font-size:27px;line-height:27px;color:#f5f5f5;left:2242px;-webkit-text-stroke:0.75px #f5f5f5;">Wed, 04 Mar 2026 21:46:20 GMT</div>
<div class="a ts" id="T98" style="letter-spacing:-0.68px;top:1527.0px;font-size:27px;line-height:27px;color:#a8a8a8;left:1858px;-webkit-text-stroke:0.35px #a8a8a8;">Etag</div>
<div class="a ts" id="T99" style="letter-spacing:0.47px;top:1526.5px;font-size:27px;line-height:27px;color:#f5f5f5;left:2242px;-webkit-text-stroke:0.75px #f5f5f5;">W/&quot;10a-W8k9rUOR+zZG9xQQp8hg7694N1E&quot;</div>
<div class="a ts" id="T100" style="letter-spacing:0.25px;top:1594.0px;font-size:27px;line-height:27px;color:#a8a8a8;left:1858px;-webkit-text-stroke:0.35px #a8a8a8;">Server-Timing</div>
<div class="a ts" id="T101" style="letter-spacing:0.50px;top:1593.5px;font-size:27px;line-height:27px;color:#f5f5f5;left:2242px;-webkit-text-stroke:0.75px #f5f5f5;">handler, action;dur=659</div>
<div class="a ts" id="T102" style="letter-spacing:-0.16px;top:1661.5px;font-size:27px;line-height:27px;color:#a8a8a8;left:1858px;-webkit-text-stroke:0.35px #a8a8a8;">Traceparent</div>
<div class="a ts" id="T103" style="letter-spacing:0.41px;top:1661.0px;font-size:27px;line-height:27px;color:#f5f5f5;left:2242px;-webkit-text-stroke:0.75px #f5f5f5;">00-a8bc2f17c4ccce87cc7376e5246a221b-f4ae4de5a55bc727-01</div>
<div class="a ts" id="T104" style="letter-spacing:0.27px;top:1728.0px;font-size:27px;line-height:27px;color:#a8a8a8;left:1858px;-webkit-text-stroke:0.35px #a8a8a8;">Tracestate</div>
<div class="a ts" id="T105" style="letter-spacing:0.14px;top:1727.5px;font-size:27px;line-height:27px;color:#f5f5f5;left:2242px;-webkit-text-stroke:0.75px #f5f5f5;">inngest@traceref=%7B%22tp%22%3A%2200-</div>
<div class="a ts" id="T106" style="letter-spacing:0.27px;top:1935.5px;font-size:27px;line-height:27px;color:#a8a8a8;left:1858px;-webkit-text-stroke:0.35px #a8a8a8;">User-Agent</div>
<div class="a ts" id="T107" style="letter-spacing:0.32px;top:1935.0px;font-size:27px;line-height:27px;color:#f5f5f5;left:2242px;-webkit-text-stroke:0.75px #f5f5f5;">inngest-js:v3.52.6</div>
<div class="a ts" id="T108" style="letter-spacing:0.50px;top:2002.5px;font-size:27px;line-height:27px;color:#a8a8a8;left:1858px;-webkit-text-stroke:0.35px #a8a8a8;">X-Inngest-Framework</div>
<div class="a ts" id="T109" style="letter-spacing:-0.26px;top:2002.0px;font-size:27px;line-height:27px;color:#f5f5f5;left:2242px;-webkit-text-stroke:0.75px #f5f5f5;">express</div>
<div class="a ts" id="T110" style="letter-spacing:0.22px;top:2069.6px;font-size:27px;line-height:27px;color:#a8a8a8;left:1858px;-webkit-text-stroke:0.35px #a8a8a8;">X-Inngest-Req-Version</div>
<div class="a ts" id="T111" style="top:2069.1px;font-size:27px;line-height:27px;color:#f5f5f5;left:2242px;-webkit-text-stroke:0.75px #f5f5f5;">1</div>
<div class="a ts" id="T112" style="letter-spacing:0.33px;top:2136.6px;font-size:27px;line-height:27px;color:#a8a8a8;left:1858px;-webkit-text-stroke:0.35px #a8a8a8;">X-Inngest-Sdk</div>
<div class="a ts" id="T113" style="letter-spacing:0.32px;top:2136.1px;font-size:27px;line-height:27px;color:#f5f5f5;left:2242px;-webkit-text-stroke:0.75px #f5f5f5;">inngest-js:v3.52.6</div>
<div class="a ts" id="T114" style="letter-spacing:0.34px;top:2203.6px;font-size:27px;line-height:27px;color:#a8a8a8;left:1858px;-webkit-text-stroke:0.35px #a8a8a8;">X-Powered-By</div>
<div class="a ts" id="T115" style="letter-spacing:-0.59px;top:2203.1px;font-size:27px;line-height:27px;color:#f5f5f5;left:2242px;-webkit-text-stroke:0.75px #f5f5f5;">Express</div>
<div class="a ts" id="T116" style="letter-spacing:0.40px;top:1761.0px;font-size:27px;line-height:27px;color:#f5f5f5;left:2242px;-webkit-text-stroke:0.75px #f5f5f5;">4ae839c5e4ad018af0769cc149435e7f-10e0bc5e1d0e5bfb-</div>
<div class="a ts" id="T117" style="letter-spacing:-0.17px;top:1796.0px;font-size:27px;line-height:27px;color:#f5f5f5;left:2242px;-webkit-text-stroke:0.75px #f5f5f5;">01%22%2C%22ts%22%3A%22%22%7D,inngest@fn=47e95a26-</div>
<div class="a ts" id="T118" style="letter-spacing:0.63px;top:1831.0px;font-size:27px;line-height:27px;color:#f5f5f5;left:2242px;-webkit-text-stroke:0.75px #f5f5f5;">3985-50d3-b27b-d61742b7bc60,inngest@app=eea6afc5-e66d-</div>
<div class="a ts" id="T119" style="letter-spacing:0.65px;top:1866.0px;font-size:27px;line-height:27px;color:#f5f5f5;left:2242px;-webkit-text-stroke:0.75px #f5f5f5;">5b26-8504-0e651b7fbcea</div>
<div class="a" style="left:1817px;top:1606px;width:16px;height:63px;background:#0a0a0a;border-radius:8px;box-shadow:inset 0 0 0 2px #555;"></div>
<div class="a" style="left:1824px;top:1625px;width:2px;height:26px;background:#dddddd;"></div>
</div>
<div class="a" style="left:112px;top:76px;width:3010px;height:2204px;box-sizing:border-box;border:2px solid #5f6064;border-radius:40px;"></div>
</body></html>
